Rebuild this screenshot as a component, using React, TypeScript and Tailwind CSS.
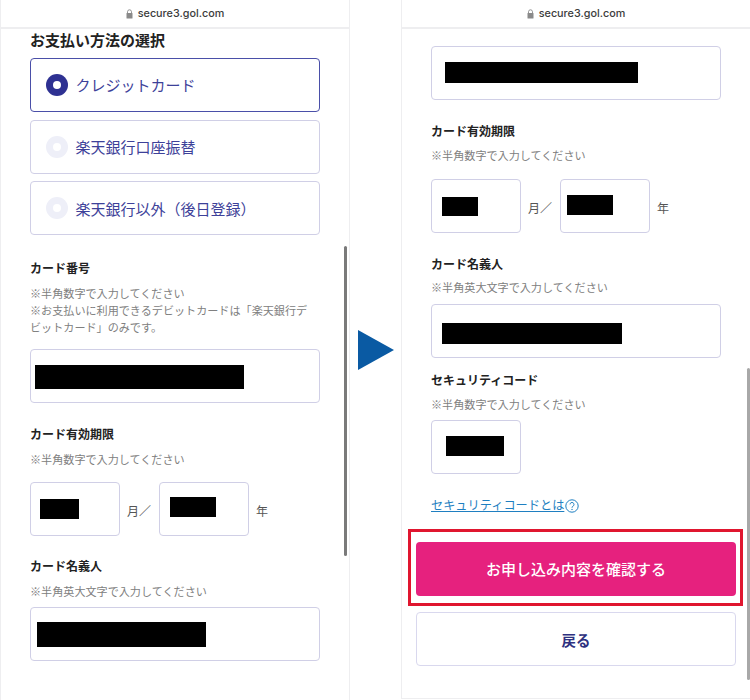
import React from 'react';

const font = { fontFamily: '"Noto Sans CJK JP", Inter, sans-serif' };

function TopBar() {
  return (
    <div className="h-[29px] shrink-0 flex items-center justify-center gap-[5px] pt-[1px] border-b-2 border-[#eeeef0] bg-white">
      <svg width="7" height="10" viewBox="0 0 7 10" className="mt-[-1px]">
        <path d="M1.5 4V2.8a2 2 0 0 1 4 0V4" fill="none" stroke="#8a8a8a" strokeWidth="0.9" />
        <rect x="0.5" y="4" width="6" height="5.5" rx="0.6" fill="#8a8a8a" />
      </svg>
      <span className="font-['Inter'] text-[10.8px] leading-none font-medium text-[#3c3c3c]">secure3.gol.com</span>
    </div>
  );
}

function Radio({ label, active }: { label: string; active?: boolean }) {
  return (
    <div className={`h-[54px] w-[290px] rounded-[4px] border flex items-center pl-[15px] bg-white ${active ? 'border-[#4a4fa8]' : 'border-[#d0cfe6]'}`}>
      <div className={`w-[22px] h-[22px] rounded-full flex items-center justify-center ${active ? 'bg-[#2e3192]' : 'bg-[#eeeff8]'}`}>
        <div className="w-[8px] h-[8px] rounded-full bg-white" />
      </div>
      <span className={`ml-[7.5px] text-[15px] leading-none text-[#3d4199] ${active ? 'mt-[-2px]' : 'mt-0'}`}>{label}</span>
    </div>
  );
}

function Label({ children, className = '' }: { children: React.ReactNode; className?: string }) {
  return <div className={`text-[12px] leading-[17px] font-bold text-[#222] ${className}`}>{children}</div>;
}

function Hint({ children, className = '' }: { children: React.ReactNode; className?: string }) {
  return <div className={`text-[11.1px] leading-[17px] text-[#808080] ${className}`}>{children}</div>;
}

function Input({ w, h, ml, mt, width = 'w-[290px]' }: { w: number; h: number; ml: number; mt: number; width?: string }) {
  return (
    <div className={`h-[54px] ${width} shrink-0 rounded-[4px] border border-[#d0cfe6] bg-white`}>
      <div className="bg-black" style={{ width: w, height: h, marginLeft: ml, marginTop: mt }} />
    </div>
  );
}

function Expiry({ a, b }: { a: [number, number, number, number]; b: [number, number, number, number] }) {
  return (
    <div className="flex items-center">
      <Input width="w-[90px]" w={a[0]} h={a[1]} ml={a[2]} mt={a[3]} />
      <span className="ml-[7px] mt-[3px] w-[32px] text-[12px] text-[#555]">月／</span>
      <Input width="w-[90px]" w={b[0]} h={b[1]} ml={b[2]} mt={b[3]} />
      <span className="ml-[7px] mt-[3px] text-[12px] text-[#555]">年</span>
    </div>
  );
}

function Scrollbar({ className }: { className: string }) {
  return <div className={`absolute w-[3px] rounded-full bg-[#7a7a7a] ${className}`} />;
}

export default function App() {
  return (
    <div className="w-[750px] h-[700px] flex overflow-hidden bg-white" style={font}>
      {/* Left phone */}
      <div className="relative w-[350px] h-[700px] shrink-0 flex flex-col border-x border-[#eeeef0]">
        <TopBar />
        <div className="pl-[29px] flex flex-col">
          <div className="text-[15px] leading-[22px] font-bold text-[#222]">お支払い方法の選択</div>
          <div className="mt-[7px] flex flex-col gap-[7.5px]">
            <Radio label="クレジットカード" active />
            <Radio label="楽天銀行口座振替" />
            <Radio label="楽天銀行以外（後日登録）" />
          </div>
          <Label className="mt-[24px]">カード番号</Label>
          <Hint className="mt-[9px] w-[282px]">
            ※半角数字で入力してください
            <br />
            ※お支払いに利用できるデビットカードは「楽天銀行デビットカード」のみです。
          </Hint>
          <div className="mt-[13px]">
            <Input w={209} h={24} ml={4} mt={15} />
          </div>
          <Label className="mt-[22px]">カード有効期限</Label>
          <Hint className="mt-[9px]">※半角数字で入力してください</Hint>
          <div className="mt-[14px]">
            <Expiry a={[39, 20, 9, 16]} b={[46, 20, 10, 14]} />
          </div>
          <Label className="mt-[21px]">カード名義人</Label>
          <Hint className="mt-[9px]">※半角英大文字で入力してください</Hint>
          <div className="mt-[7px]">
            <Input w={169} h={25} ml={6} mt={14} />
          </div>
        </div>
        <Scrollbar className="left-[343px] top-[246px] h-[310px]" />
      </div>

      {/* Arrow between the two phones */}
      <div className="w-[51px] shrink-0 flex items-center justify-center">
        <svg width="36" height="40" viewBox="0 0 36 40">
          <polygon points="0,0 36,20 0,40" fill="#0a5aa3" />
        </svg>
      </div>

      {/* Right phone */}
      <div className="relative flex-1 h-[699px] flex flex-col border-l border-b border-[#eeeef0]">
        <TopBar />
        <div className="pl-[29px] flex flex-col">
          <div className="mt-[17px]">
            <Input w={193} h={21} ml={13} mt={15} />
          </div>
          <Label className="mt-[22px]">カード有効期限</Label>
          <Hint className="mt-[8px]">※半角数字で入力してください</Hint>
          <div className="mt-[15px]">
            <Expiry a={[36, 19, 10, 17]} b={[46, 20, 6, 15]} />
          </div>
          <Label className="mt-[22px]">カード名義人</Label>
          <Hint className="mt-[7px]">※半角英大文字で入力してください</Hint>
          <div className="mt-[8px]">
            <Input w={180} h={21} ml={10} mt={18} />
          </div>
          <Label className="mt-[13px]">セキュリティコード</Label>
          <Hint className="mt-[8px]">※半角数字で入力してください</Hint>
          <div className="mt-[7px]">
            <Input width="w-[90px]" w={58} h={20} ml={14} mt={15} />
          </div>
          <div className="mt-[23px] flex items-center h-[17px] gap-[1px]">
            <span className="text-[12.2px] leading-[17px] text-[#1f7fc1] underline">セキュリティコードとは</span>
            <svg width="14" height="14" viewBox="0 0 14 14">
              <circle cx="7" cy="7" r="6.2" fill="none" stroke="#1f7fc1" strokeWidth="1" />
              <path d="M5 5.4a2 2 0 1 1 3 1.8c-.7.4-1 .8-1 1.5" fill="none" stroke="#1f7fc1" strokeWidth="1" />
              <circle cx="7" cy="10.4" r="0.7" fill="#1f7fc1" />
            </svg>
          </div>
        </div>
        <div className="mt-[15px] ml-[6px] w-[335px] h-[77px] border-[3px] border-[#e0162f] pt-[10px] pl-[5px]">
          <div className="w-[320px] h-[54px] rounded-[4px] bg-[#e6217e] flex items-center justify-center text-[15px] font-medium text-white">
            お申し込み内容を確認する
          </div>
        </div>
        <div className="mt-[6px] ml-[14px] w-[320px] h-[54px] rounded-[4px] border border-[#d9d8ee] flex items-center justify-center pt-[1px] text-[14.5px] font-bold text-[#2e3180]">
          戻る
        </div>
        <Scrollbar className="left-[345px] top-[368px] h-[312px] bg-[#a8a8a8]" />
      </div>
    </div>
  );
}
